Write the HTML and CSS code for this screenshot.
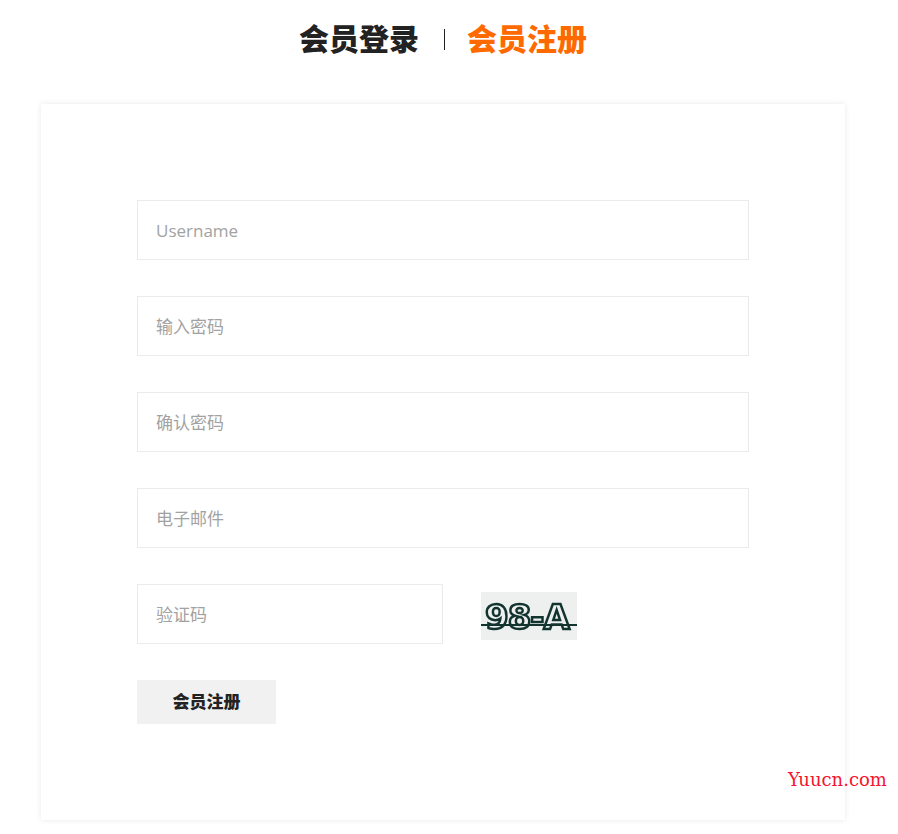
FILE: index.html
```html
<!DOCTYPE html>
<html lang="zh-CN">
<head>
<meta charset="UTF-8">
<meta name="viewport" content="width=device-width, initial-scale=1.0">
<title>会员注册</title>
<link rel="stylesheet" href="styles.css">
</head>
<body>
<div class="tabs">
    <a class="tab" href="#">会员登录</a>
    <span class="tab-sep"></span>
    <a class="tab tab-active" href="#">会员注册</a>
</div>
<div class="card">
    <form class="reg-form">
        <input class="field" type="text" placeholder="Username">
        <input class="field" type="password" placeholder="输入密码">
        <input class="field" type="password" placeholder="确认密码">
        <input class="field" type="text" placeholder="电子邮件">
        <div class="captcha-row">
            <input class="field field-code" type="text" placeholder="验证码">
            <div class="captcha"><span class="captcha-text">98-A</span></div>
        </div>
        <button class="submit" type="button">会员注册</button>
    </form>
</div>
<div class="watermark">Yuucn.com</div>
</body>
</html>
```

FILE: styles.css
```css
* {
    box-sizing: border-box;
}
body {
    margin: 0;
    height: 834px;
    overflow: hidden;
    background-color: #fff;
    font-family: "Open Sans", "Noto Sans CJK SC", sans-serif;
    color: #222;
}
.tabs {
    display: flex;
    justify-content: center;
    align-items: center;
    width: 886px;
    height: 78px;
    margin-bottom: 26px;
}
.tab {
    font-size: 30px;
    font-weight: 900;
    line-height: 40px;
    color: #222;
    text-decoration: none;
}
.tab-active {
    color: #ff6a00;
}
.tab-sep {
    width: 1px;
    height: 21px;
    margin: 0 22px 0 25px;
    background-color: #222;
}
.card {
    width: 804px;
    height: 716px;
    margin-left: 41px;
    padding: 96px 96px 0;
    background-color: #fff;
    box-shadow: 0 0 6px rgba(0, 0, 0, 0.09);
}
.reg-form {
    display: flex;
    flex-direction: column;
    gap: 36px;
}
.field {
    display: block;
    width: 612px;
    height: 60px;
    padding: 0 18px;
    border: 1px solid #ebebeb;
    outline: none;
    font-family: inherit;
    font-size: 17px;
    color: #222;
    background-color: #fff;
}
.field::placeholder {
    color: #a2a2a2;
    opacity: 1;
}
.field-code {
    width: 306px;
}
.captcha-row {
    display: flex;
    align-items: flex-start;
    gap: 38px;
}
.captcha {
    position: relative;
    width: 96px;
    height: 48px;
    margin-top: 8px;
    overflow: hidden;
    background-color: #eef0ef;
}
.captcha::after {
    content: "";
    position: absolute;
    left: 0;
    top: 32px;
    width: 96px;
    height: 2px;
    background-color: #12332e;
    filter: blur(0.6px);
}
.captcha-text {
    display: block;
    padding: 2px 0 0 4px;
    font-family: "DejaVu Sans", sans-serif;
    font-size: 34px;
    font-weight: 700;
    line-height: 46px;
    letter-spacing: -1px;
    white-space: nowrap;
    color: transparent;
    -webkit-text-stroke: 2.5px #12332e;
    filter: blur(0.7px);
}
.submit {
    width: 139px;
    height: 44px;
    padding: 0;
    border: none;
    background-color: #f1f1f1;
    font-family: inherit;
    font-size: 17px;
    font-weight: 900;
    line-height: 42px;
    color: #222;
    cursor: pointer;
}
.watermark {
    position: absolute;
    left: 788px;
    top: 769px;
    font-family: "DejaVu Serif", serif;
    font-size: 18px;
    line-height: 22px;
    color: #f5142e;
}
```
